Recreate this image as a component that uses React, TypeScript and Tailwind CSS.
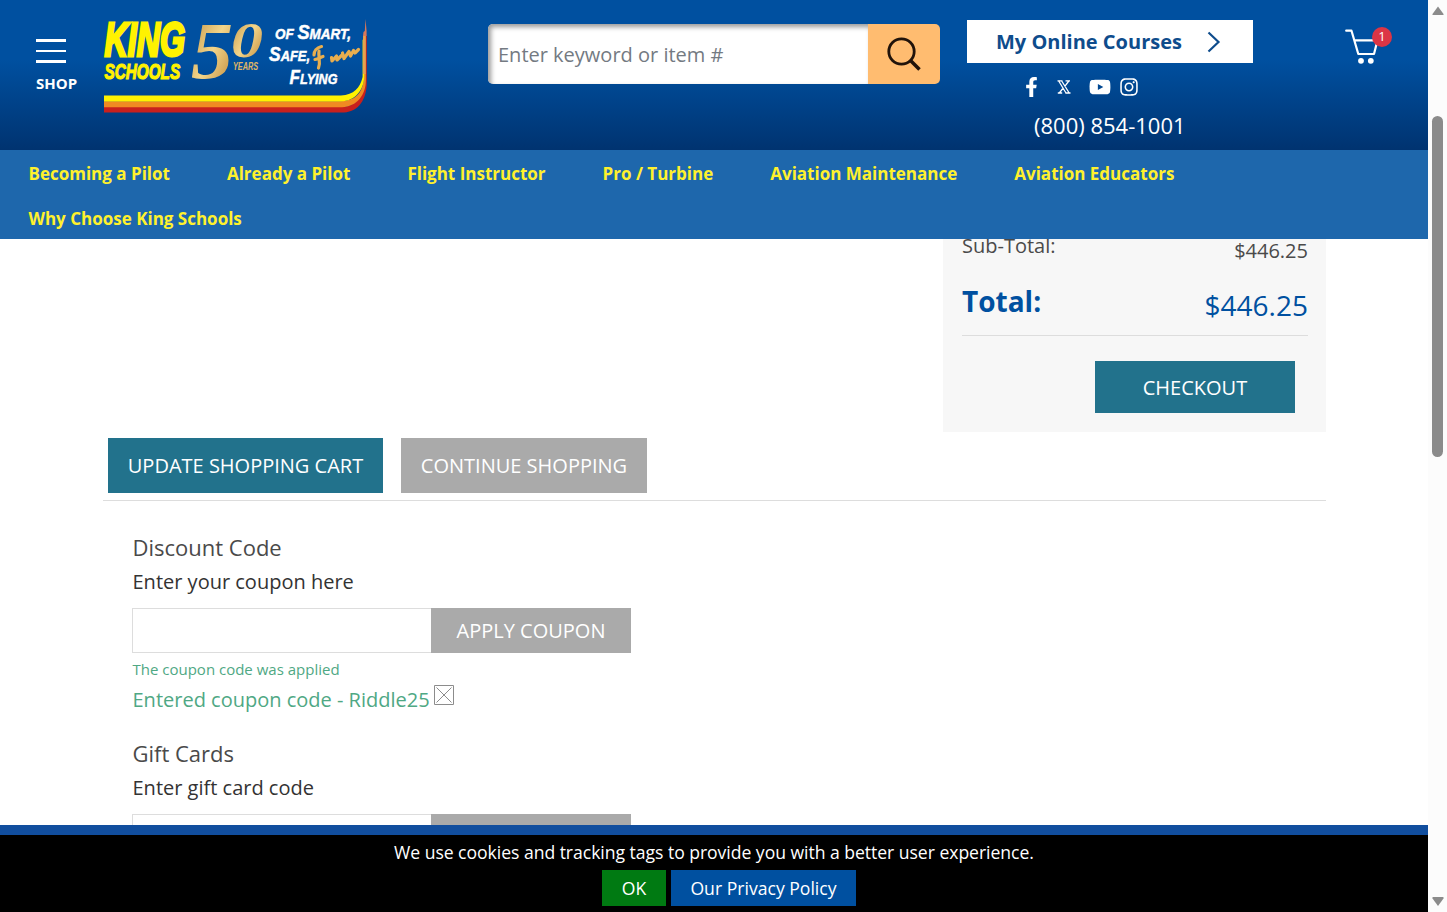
import React, { useState } from 'react';
import { FaFacebookF, FaInstagram, FaYoutube } from 'react-icons/fa';

const navItems = [
  'Becoming a Pilot',
  'Already a Pilot',
  'Flight Instructor',
  'Pro / Turbine',
  'Aviation Maintenance',
  'Aviation Educators',
  'Why Choose King Schools',
];

function Logo() {
  return (
    <svg width="280" height="132" viewBox="96 0 280 132" fontFamily="'Liberation Sans Narrow', 'Liberation Sans', sans-serif" fontWeight="700" fontStyle="italic">
      <defs>
        <linearGradient id="gold" x1="0" y1="0" x2="1" y2="1">
          <stop offset="0" stopColor="#b98a3c" />
          <stop offset="0.5" stopColor="#f3d58a" />
          <stop offset="1" stopColor="#b67c2c" />
        </linearGradient>
      </defs>
      <g fill="#fff200" stroke="#fff200">
        <text x="0" y="0" fontSize="48" strokeWidth="3" textLength="112" lengthAdjust="spacingAndGlyphs" transform="translate(104.500 55.700) scale(0.72 1)">KING</text>
        <text x="0" y="0" fontSize="22" strokeWidth="1.2" textLength="105" lengthAdjust="spacingAndGlyphs" transform="translate(104.500 78.500) scale(0.72 1)">SCHOOLS</text>
      </g>

      {/* Anniversary numerals */}
      <g fill="url(#gold)" fontFamily="'Liberation Serif', serif">
        <text x="191" y="78" fontSize="81" textLength="42" lengthAdjust="spacingAndGlyphs">5</text>
        <text x="231" y="57" fontSize="51" textLength="32" lengthAdjust="spacingAndGlyphs">0</text>
      </g>
      <text x="233" y="69.500" fontSize="10" textLength="25" lengthAdjust="spacingAndGlyphs" fill="#e0b765">YEARS</text>

      <g fill="#fff" stroke="#fff" strokeWidth="0.5" fontSize="15.5">
        <text x="275" y="39" textLength="76" lengthAdjust="spacingAndGlyphs">
          OF <tspan fontSize="21">S</tspan>MART,
        </text>
        <text x="269" y="61" textLength="41" lengthAdjust="spacingAndGlyphs">
          <tspan fontSize="21">S</tspan>AFE,
        </text>
        <text x="289.500" y="83.500" textLength="48" lengthAdjust="spacingAndGlyphs">
          <tspan fontSize="21">F</tspan>LYING
        </text>
      </g>

      {/* Brush script flourish */}
      <g fill="none" stroke="#e9ae4e" strokeLinecap="round" strokeLinejoin="round">
        <path strokeWidth="3.2" d="M321.500 46.500c-5 1-7.500 5-7.500 8.500M319 51c-1 7 2 10-.5 17M315 59.500c3-.5 5-2 8-3" />
        <path strokeWidth="3.200" d="M331.500 57.500l.5 3.500 4.500-5 .5 4 4.500-4.500M342.500 53l1.500 5.500 5-7 1.500 4.500 3-5.500 1.500 2.500 3.500-3.500" />
      </g>

      {/* Runway stripes */}
      <g>
        <path d="M104 112.500H344C359 111.500 366.800 99 366.800 82V36L365.500 36V82C363 98 355 106.500 342 107H104Z" fill="#c8201d" />
        <path d="M104 107.300H342C357 106.500 365.900 95 365.900 80V36L363.800 36V80C362 94 355 100.500 341 101.300H104Z" fill="#f08a22" />
        <path d="M104 101.500H341C355 101 364.200 90 364.200 76V38L362.600 40V77C360 88 354 94.800 341 95.500H104Z" fill="#fff200" />
        <path d="M363 36L363.500 32L364.800 31L365.500 19L366.600 31V36Z" fill="#d9785a" />
        <path d="M364.300 36V74" stroke="#e8a052" strokeWidth="2.5" />
      </g>
    </svg>
  );
}

function XIcon() {
  return (
    <svg width="14" height="14" viewBox="0 0 14 14" fill="none" stroke="#fff" strokeWidth="1.300">
      <path d="M.5 .9H5.500M8.500 .9H13M.8 13H5.200M8.300 13H13.500M1.700 1L9 13M4.700 1L12.200 13M11.800 1L7.800 6.300M6.200 8L2.300 13" />
    </svg>
  );
}

function CartIcon() {
  return (
    <svg width="36" height="36" viewBox="0 0 36 36" fill="none" stroke="#fff" strokeWidth="2.200" strokeLinecap="round" strokeLinejoin="round">
      <path d="M1.200 1.700H6.500L13.300 25H29L32.500 11.300H10" />
      <circle cx="16" cy="31.800" r="2.900" fill="#fff" stroke="none" />
      <circle cx="25.800" cy="31.800" r="2.900" fill="#fff" stroke="none" />
    </svg>
  );
}

function Header() {
  const [keyword, setKeyword] = useState('');

  return (
    <header className="flex h-[150px] shrink-0 items-start bg-[linear-gradient(180deg,#0050a0_0%,#0050a0_40%,#003370_100%)] text-white">
      <button className="ml-9 mt-[39px] w-[42px] text-left">
        <span className="flex flex-col gap-[8px]">
          <span className="h-[2.5px] w-[30px] bg-white" />
          <span className="h-[2.5px] w-[30px] bg-white" />
          <span className="h-[2.5px] w-[30px] bg-white" />
        </span>
        <span className="mt-[10px] block text-[15px] leading-5 font-bold">SHOP</span>
      </button>
      <div className="ml-[18px] w-[280px]">
        <Logo />
      </div>

      <form className="ml-[112px] mt-6 flex h-[60px] w-[452px] overflow-hidden rounded-[5px]">
        <input
          value={keyword}
          onChange={(e) => setKeyword(e.target.value)}
          placeholder="Enter keyword or item #"
          className="w-[380px] bg-white pt-[2px] pl-[10px] text-[20px] text-gray-800 shadow-[inset_3px_3px_5px_#999] outline-none placeholder:text-[#747a82]"
        />
        <button type="button" className="flex flex-1 items-center justify-center bg-[#ffbc70]">
          <svg width="36" height="36" viewBox="0 0 36 36" fill="none" stroke="#21130a" strokeWidth="2.800">
            <circle cx="15.500" cy="15.500" r="12.700" />
            <path d="M24.500 24.500L33.500 33.500" strokeWidth="3.500" />
          </svg>
        </button>
      </form>

      <div className="ml-[27px] mt-5 w-[286px]">
        <button className="flex h-[43px] w-full items-center bg-white pl-[29px] text-[20px] font-bold text-[#0e4c8c]">
          <span className="w-[211px] text-left">My Online Courses</span>
          <svg width="14" height="22" viewBox="0 0 14 22" fill="none" stroke="#0e4c8c" strokeWidth="2.200">
            <path d="M1.500 1.500L11.500 11L1.500 20.500" />
          </svg>
        </button>
        <div className="mt-[13px] flex h-[22px] items-center pl-[58px]">
          <FaFacebookF className="h-5 w-[13px]" />
          <span className="ml-[19px]"><XIcon /></span>
          <FaYoutube className="ml-[18px] h-[22px] w-[22px]" />
          <FaInstagram className="ml-[8px] h-[20px] w-[20px]" />
        </div>
        <div className="mt-[12px] pl-[67px] text-[22px] leading-[30px]">(800) 854-1001</div>
      </div>

      <div className="relative ml-[92px] mt-[29px]">
        <CartIcon />
        <span className="absolute -top-[2px] left-[27px] flex size-5 items-center justify-center rounded-full bg-[#dc3545] text-[13px]">1</span>
      </div>
    </header>
  );
}

function CodeForm({ title, hint, button }: { title: string; hint: string; button?: string }) {
  return (
    <>
      <h2 className="text-[22px] leading-[34px] text-[#4a4a4a]">{title}</h2>
      <p className="pt-px text-[20px] leading-[34px] text-[#333]">{hint}</p>
      <div className="mt-[9px] -ml-[0.5px] flex h-[45px] w-[499px]">
        <input className="w-[299px] border border-r-0 border-[#ddd] px-3 outline-none" />
        <button className="w-[200px] bg-[#aaa] text-[20px] text-white">{button}</button>
      </div>
    </>
  );
}

function Cart() {
  return (
    <main className="min-h-0 flex-1 overflow-hidden bg-white pl-[103px]">
      <div className="flex h-[193px] w-[1223px] justify-end">
        <aside className="w-[383px] bg-[#f7f7f7] pr-[18px] pl-[19px]">
          <div className="flex h-[25px] justify-between text-[20px] leading-[28px] text-[#4a4a4a]">
            <span className="-mt-[7px]">Sub-Total:</span>
            <span className="-mt-[2px]">$446.25</span>
          </div>
          <div className="mt-[16px] flex h-[56px] justify-between border-b border-[#ddd] text-[28px] leading-[40px] text-[#0050a0]">
            <span className="mt-px font-bold">Total:</span>
            <span className="mt-[5px]">$446.25</span>
          </div>
          <div className="mt-[25px] flex justify-end pr-[13px]">
            <button className="h-[52px] w-[200px] bg-[#22728c] pt-px text-[20px] text-white">CHECKOUT</button>
          </div>
        </aside>
      </div>

      <div className="flex h-[69px] w-[1223px] items-start gap-[18px] border-b border-[#ddd] pt-[6px] pl-[5px] text-[20px] text-white">
        <button className="h-[55px] w-[275px] bg-[#22728c]">UPDATE SHOPPING CART</button>
        <button className="h-[55px] w-[246px] bg-[#aaa]">CONTINUE SHOPPING</button>
      </div>

      <section className="pt-[29px] pl-[29.5px]">
        <CodeForm title="Discount Code" hint="Enter your coupon here" button="APPLY COUPON" />
        <p className="mt-[5px] text-[15px] leading-[22px] text-[#4fa884]">The coupon code was applied</p>
        <p className="flex h-[38px] pt-px text-[20px] leading-[38px] text-[#4fa884]">
          Entered coupon code - Riddle25
          <svg className="ml-[4.5px] mt-[4px]" width="20" height="20" viewBox="0 0 20 20" fill="none" stroke="#8c8c8c">
            <path d="M.5 .5H19.500V19.500H.5ZM2.500 2.500L17.500 17.500M17.500 2.500L2.500 17.500" />
          </svg>
        </p>
      </section>

      <section className="pt-[18px] pl-[29.5px]">
        <CodeForm title="Gift Cards" hint="Enter gift card code" />
      </section>
    </main>
  );
}

function Scrollbar() {
  return (
    <div className="flex w-[19px] flex-col items-center bg-[#fcfcfc]">
      <svg width="12" height="9" viewBox="0 0 12 9" className="mt-[6px]">
        <path d="M6 .5L11.500 8Q12 9 11 9H1Q0 9 .5 8Z" fill="#8b8b8b" />
      </svg>
      <div className="mt-[101px] h-[341px] w-[11px] rounded-full bg-[#8b8b8b]" />
      <svg width="12" height="9" viewBox="0 0 12 9" className="mt-auto mb-[6px]">
        <path d="M6 9L.5 1.500Q0 0 1 0H11Q12 0 11.500 1.500Z" fill="#8b8b8b" />
      </svg>
    </div>
  );
}

export default function App() {
  return (
    <div className="flex h-[912px] w-[1447px] overflow-hidden font-['Open_Sans','Noto_Sans',sans-serif]">
      <div className="flex w-[1428px] flex-col">
        <Header />
        <nav className="flex h-[89px] shrink-0 flex-wrap content-start gap-x-[57px] bg-[#1e67ac] pt-px pr-[120px] pl-[28.5px] text-[17px] font-bold text-[#fff12d]">
          {navItems.map((item) => (
            <a key={item} href="#" className="leading-[45px]">{item}</a>
          ))}
        </nav>
        <Cart />
        <footer className="h-[87px] shrink-0 border-t-[10px] border-[#114e9e] bg-black text-center text-[17.6px] text-white">
          <p className="leading-[35px] tracking-[-0.04px]">We use cookies and tracking tags to provide you with a better user experience.</p>
          <div className="flex justify-center gap-[5px] pl-[30px]">
            <button className="h-9 w-16 bg-[#007a12]">OK</button>
            <button className="h-9 w-[185px] bg-[#0050a0]">Our Privacy Policy</button>
          </div>
        </footer>
      </div>
      <Scrollbar />
    </div>
  );
}
